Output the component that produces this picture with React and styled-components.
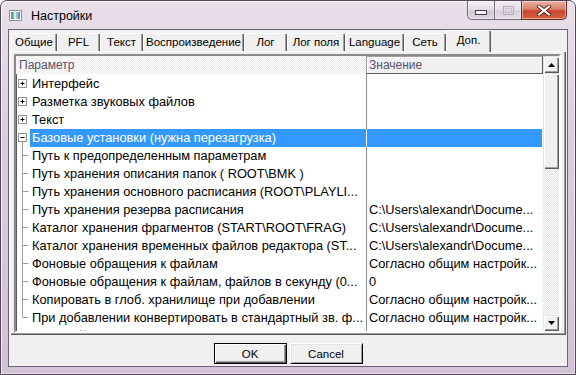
import styled, { createGlobalStyle } from 'styled-components';

const GlobalStyle = createGlobalStyle`
  html, body { margin: 0; padding: 0; background: #fff; }
  body { font-family: "Liberation Sans", Arial, sans-serif; }
  #root { width: 576px; height: 375px; }
`;

const Window = styled.div`
  box-sizing: border-box;
  width: 576px;
  height: 375px;
  display: flex;
  flex-direction: column;
  padding: 0 7px 7px;
  border: 1px solid #4f4656;
  border-radius: 7px 7px 0 0;
  background: linear-gradient(180deg, #e9e0ea 0%, #dccdde 35%, #d3c1d6 100%);
  box-shadow: inset 1px 1px 0 rgba(255,255,255,.7), inset -1px -1px 0 rgba(255,255,255,.5);
`;

const TitleBar = styled.div`
  height: 28px;
  display: flex;
  align-items: flex-start;
`;

const Title = styled.span`
  margin: 7px 0 0 9px;
  font: 12.5px/16px "Liberation Sans", Arial, sans-serif;
  color: #000;
`;

const Controls = styled.div`
  margin: 0 1px 0 auto;
  display: flex;
  height: 19px;
`;

const CtlButton = styled.div`
  box-sizing: border-box;
  width: ${({ w }) => w}px;
  height: 19px;
  display: flex;
  align-items: center;
  justify-content: center;
  border: 1px solid ${({ close }) => (close ? '#6b2a22' : '#6f6a78')};
  border-top: none;
  margin-left: -1px;
  border-radius: ${({ r }) => r || '0'};
  background: ${({ close, off }) =>
    close
      ? 'linear-gradient(180deg, #ebb0a3 0%, #dd7f6c 45%, #c7452f 55%, #d5623f 100%)'
      : off
      ? 'linear-gradient(180deg, #f1edf3 0%, #e3dde7 50%, #d8d1dd 55%, #e2dbe5 100%)'
      : 'linear-gradient(180deg, #f3eff5 0%, #e2dce6 50%, #cfc7d5 55%, #ddd5e1 100%)'};
  box-shadow: inset 0 0 0 1px rgba(255,255,255,.45);
`;

const Client = styled.div`
  flex: 1;
  display: flex;
  flex-direction: column;
  padding: 0 1px;
  border: 1px solid #6d6475;
  background: #f0f0f0;
  font-size: 11px;
`;

const TabStrip = styled.div`
  height: 21px;
  margin-left: 1px;
  display: flex;
  align-items: flex-end;
  position: relative;
  z-index: 1;
`;

const Tab = styled.div`
  box-sizing: border-box;
  width: ${({ w }) => w}px;
  height: ${({ active }) => (active ? 22 : 18)}px;
  margin-bottom: ${({ active }) => (active ? -1 : 0)}px;
  display: flex;
  align-items: center;
  justify-content: center;
  padding-bottom: ${({ active }) => (active ? 3 : 0)}px;
  background: #f0f0f0;
  border-top: 1px solid #fff;
  border-left: 1px solid #fff;
  border-right: 1px solid #5a5a5a;
  border-radius: 2px 2px 0 0;
  box-shadow: inset -1px 0 0 #a0a0a0;
  font: 11.5px/13px "Liberation Sans", Arial, sans-serif;
  color: #000;
  white-space: nowrap;
`;

const Page = styled.div`
  box-sizing: border-box;
  height: 284px;
  padding: 3px 5px 0 4px;
  background: #f0f0f0;
  box-shadow: inset 1px 1px 0 #fff, inset -1px -1px 0 #5a5a5a, inset -2px -2px 0 #a0a0a0;
`;

const ListBox = styled.div`
  box-sizing: border-box;
  height: 279px;
  display: flex;
  border: 2px solid;
  border-color: #8a8a8a #fff #fff #8a8a8a;
  box-shadow: inset 1px 1px 0 #5a5a5a;
  background: #fff;
  overflow: hidden;
`;

const Grid = styled.div`
  flex: 1;
  display: flex;
  flex-direction: column;
  overflow: hidden;
  font: 12.8px/18px "Liberation Sans", Arial, sans-serif;
`;

const HeaderRow = styled.div`
  height: 18px;
  display: flex;
  flex-shrink: 0;
  font-size: 12px;
  color: #5a5070;
`;

const HeadCell = styled.div`
  box-sizing: border-box;
  width: ${({ w }) => w}px;
  padding-left: ${({ pad }) => pad}px;
  line-height: 16px;
  ${({ raised }) =>
    raised
      ? `background: #f0f0f0;
         border: 1px solid #a0a0a0;
         border-right-color: #5a5a5a;
         border-bottom-color: #5a5a5a;
         box-shadow: inset 1px 1px 0 #fff;`
      : `background: repeating-conic-gradient(#ececec 0 25%, #fff 0 50%) 0 0 / 2px 2px;
         padding-top: 1px;`}
`;

const Rows = styled.div`
  flex: 1;
  padding-top: 1px;
  overflow: hidden;
  background: linear-gradient(#8c8c8c, #8c8c8c) 350px 0 / 1px 100% no-repeat;
`;

const Row = styled.div`
  height: 18px;
  display: flex;
  color: ${({ selected }) => (selected ? '#fff' : '#000')};
`;

const NameCell = styled.div`
  width: 336px;
  padding-left: 2px;
  box-sizing: border-box;
  white-space: nowrap;
  overflow: hidden;
  background: ${({ selected }) => (selected ? '#3399ff' : 'transparent')};
`;

const ValueCell = styled.div`
  width: 176px;
  box-sizing: border-box;
  padding-left: 2px;
  border-left: 1px solid ${({ selected }) => (selected ? '#fff' : '#8c8c8c')};
  white-space: nowrap;
  overflow: hidden;
  background: ${({ selected }) => (selected ? '#3399ff' : 'transparent')};
`;

const ScrollBar = styled.div`
  width: 16px;
  display: flex;
  flex-direction: column;
`;

const Raised = styled.div`
  box-sizing: border-box;
  height: ${({ h }) => h}px;
  display: flex;
  align-items: center;
  justify-content: center;
  background: #f0f0f0;
  box-shadow: inset 1px 1px 0 #e3e3e3, inset 2px 2px 0 #fff, inset -1px -1px 0 #5a5a5a, inset -2px -2px 0 #a0a0a0;
`;

const Track = styled.div`
  flex: 1;
  background: repeating-conic-gradient(#e4e4e4 0 25%, #fff 0 50%) 0 0 / 2px 2px;
`;

const Footer = styled.div`
  flex: 1;
  display: flex;
  justify-content: center;
  align-items: flex-start;
  gap: 3px;
  padding-top: 8px;
`;

const Button = styled.div`
  box-sizing: border-box;
  width: 73px;
  height: 21px;
  display: flex;
  align-items: center;
  justify-content: center;
  background: #f0f0f0;
  font: 11.5px "Liberation Sans", Arial, sans-serif;
  color: #000;
  border: 1px solid ${({ primary }) => (primary ? '#000' : '#fff')};
  border-right-color: #000;
  border-bottom-color: #000;
  box-shadow: ${({ primary }) =>
    primary
      ? 'inset 1px 1px 0 #fff, inset -1px -1px 0 #5a5a5a, inset -2px -2px 0 #a0a0a0'
      : 'inset 1px 1px 0 #e3e3e3, inset -1px -1px 0 #a0a0a0'};
`;

const tabs = [
  ['Общие', 46], ['PFL', 43], ['Текст', 43], ['Воспроизведение', 101], ['Лог', 43],
  ['Лог поля', 58], ['Language', 59], ['Сеть', 42], ['Доп.', 45, true],
];

const DOC = 'C:\\Users\\alexandr\\Docume...';
const SOG = 'Согласно общим настройк...';

const rows = [
  { glyph: 'plus', name: 'Интерфейс' },
  { glyph: 'plus', name: 'Разметка звуковых файлов' },
  { glyph: 'plus', name: 'Текст' },
  { glyph: 'minus', name: 'Базовые установки (нужна перезагрузка)', selected: true },
  { glyph: 'child', name: 'Путь к предопределенным параметрам' },
  { glyph: 'child', name: 'Путь хранения описания папок ( ROOT\\BMK )' },
  { glyph: 'child', name: 'Путь хранения основного расписания (ROOT\\PLAYLI...' },
  { glyph: 'child', name: 'Путь хранения резерва расписания', value: DOC },
  { glyph: 'child', name: 'Каталог хранения фрагментов (START\\ROOT\\FRAG)', value: DOC },
  { glyph: 'child', name: 'Каталог хранения временных файлов редактора (ST...', value: DOC },
  { glyph: 'child', name: 'Фоновые обращения к файлам', value: SOG },
  { glyph: 'child', name: 'Фоновые обращения к файлам, файлов в секунду (0...', value: '0' },
  { glyph: 'child', name: 'Копировать в глоб. хранилище при добавлении', value: SOG },
  { glyph: 'last', name: 'При добавлении конвертировать в стандартный зв. ф...', value: SOG },
  { glyph: 'none', name: 'Внешний вид' },
];

function TreeGlyph({ kind }) {
  const line = '#a0a0a0';
  return (
    <svg width="14" height="18" viewBox="0 0 14 18" style={{ flexShrink: 0 }}>
      {(kind === 'plus' || kind === 'minus') && (
        <>
          <rect x="2.5" y="4.5" width="8" height="8" fill="#fff" stroke="#919191" />
          <path d="M4.5 8.5h4" stroke="#000" />
          {kind === 'plus' && <path d="M6.5 6.5v4" stroke="#000" />}
          {kind === 'minus' && <path d="M6.5 13v5" stroke={line} />}
        </>
      )}
      {kind === 'child' && <path d="M6.5 0v18M6.5 8.5h6" stroke={line} />}
      {kind === 'last' && <path d="M6.5 0v8.5h6" stroke={line} fill="none" />}
    </svg>
  );
}

function AppIcon() {
  return (
    <svg width="13" height="11" viewBox="0 0 13 11" style={{ margin: '9px 0 0 1px' }}>
      <defs>
        <linearGradient id="ig" x1="0" y1="0" x2="1" y2="0">
          <stop offset="0" stopColor="#2f9a7a" />
          <stop offset="0.5" stopColor="#b8dcd6" />
          <stop offset="1" stopColor="#4b7fc8" />
        </linearGradient>
      </defs>
      <rect x="0.5" y="0.5" width="12" height="10" fill="#fff" stroke="#8d8d95" />
      <rect x="2" y="2" width="9" height="7" fill="url(#ig)" />
      <rect x="5" y="2" width="2" height="7" fill="#e8f2f2" opacity=".7" />
    </svg>
  );
}

export default function App() {
  return (
    <>
      <GlobalStyle />
      <Window>
        <TitleBar>
          <AppIcon />
          <Title>Настройки</Title>
          <Controls>
            <CtlButton w={28} r="0 0 0 5px">
              <svg width="12" height="6" viewBox="0 0 12 6" style={{ marginTop: 6 }}>
                <rect x="0.5" y="0.5" width="11" height="4" fill="#fff" stroke="#3c3c48" />
              </svg>
            </CtlButton>
            <CtlButton w={28} off>
              <svg width="11" height="9" viewBox="0 0 11 9">
                <rect x="0.5" y="0.5" width="10" height="8" fill="none" stroke="#b3adb9" />
                <rect x="2.5" y="2.5" width="6" height="4" fill="none" stroke="#c6c1cb" />
              </svg>
            </CtlButton>
            <CtlButton w={46} close r="0 0 5px 0">
              <svg width="14" height="11" viewBox="0 0 14 11">
                <path d="M2 1.5l10 8M12 1.5l-10 8" stroke="#5a2020" strokeWidth="4" strokeLinecap="round" />
                <path d="M2 1.5l10 8M12 1.5l-10 8" stroke="#fff" strokeWidth="2.2" strokeLinecap="round" />
              </svg>
            </CtlButton>
          </Controls>
        </TitleBar>
        <Client>
          <TabStrip>
            {tabs.map(([label, w, active]) => (
              <Tab key={label} w={w} active={active}>{label}</Tab>
            ))}
          </TabStrip>
          <Page>
            <ListBox>
              <Grid>
                <HeaderRow>
                  <HeadCell w={350} pad={3}>Параметр</HeadCell>
                  <HeadCell w={177} pad={2} raised>Значение</HeadCell>
                </HeaderRow>
                <Rows>
                  {rows.map((r, i) => (
                    <Row key={i} selected={r.selected}>
                      <TreeGlyph kind={r.glyph} />
                      <NameCell selected={r.selected}>{r.name}</NameCell>
                      <ValueCell selected={r.selected}>{r.value}</ValueCell>
                    </Row>
                  ))}
                </Rows>
              </Grid>
              <ScrollBar>
                <Raised h={17}>
                  <svg width="7" height="4" viewBox="0 0 7 4"><path d="M3.5 0L7 4H0z" fill="#000" /></svg>
                </Raised>
                <Raised h={96} />
                <Track />
                <Raised h={16}>
                  <svg width="7" height="4" viewBox="0 0 7 4"><path d="M0 0h7L3.5 4z" fill="#000" /></svg>
                </Raised>
              </ScrollBar>
            </ListBox>
          </Page>
          <Footer>
            <Button primary>OK</Button>
            <Button>Cancel</Button>
          </Footer>
        </Client>
      </Window>
    </>
  );
}
